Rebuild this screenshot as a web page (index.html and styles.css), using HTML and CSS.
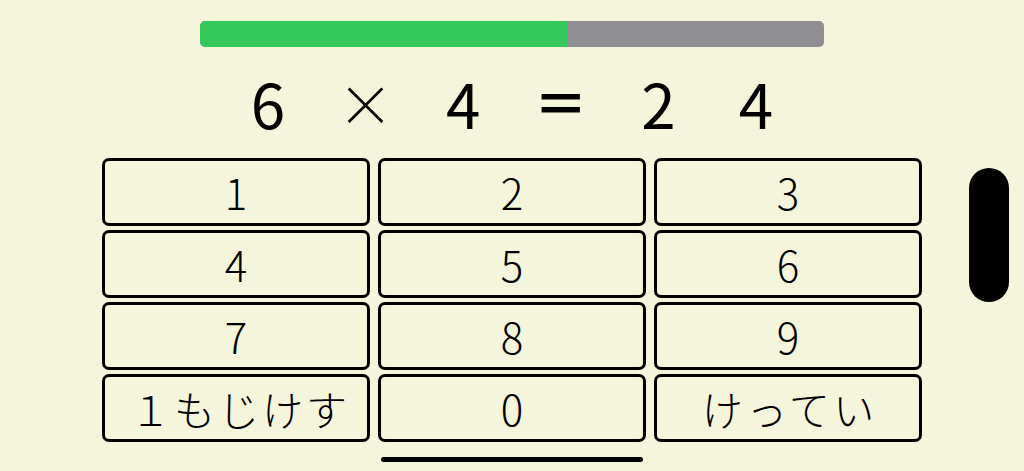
FILE: index.html
```html
<!DOCTYPE html>
<html lang="ja">
<head>
<meta charset="utf-8">
<title>かけざん</title>
<link rel="stylesheet" href="styles.css">
</head>
<body>
<div class="screen">
  <div class="progress"><div class="progress-fill" style="width: 368px"></div></div>
  <div class="equation">
    <span class="slot">6</span>
    <span class="slot slot-op">×</span>
    <span class="slot">4</span>
    <span class="slot slot-eq">＝</span>
    <span class="slot">2</span>
    <span class="slot">4</span>
  </div>
  <div class="keypad">
    <button class="key">1</button>
    <button class="key">2</button>
    <button class="key">3</button>
    <button class="key">4</button>
    <button class="key">5</button>
    <button class="key">6</button>
    <button class="key">7</button>
    <button class="key">8</button>
    <button class="key">9</button>
    <button class="key key-text key-delete">１もじけす</button>
    <button class="key">0</button>
    <button class="key key-text">けってい</button>
  </div>
  <div class="island"></div>
  <div class="home-indicator"></div>
</div>
</body>
</html>
```

FILE: styles.css
```css
html, body {
  margin: 0;
  padding: 0;
  background: #f5f5dc;
}

.screen {
  position: relative;
  width: 1024px;
  height: 471px;
  overflow: hidden;
  display: flex;
  flex-direction: column;
  align-items: center;
  padding-top: 21px;
  box-sizing: border-box;
  font-family: "Noto Sans CJK JP", "Noto Sans", sans-serif;
  color: #000;
}

.progress {
  width: 624px;
  height: 26px;
  border-radius: 5px;
  background: #8e8e93;
  overflow: hidden;
  display: flex;
}

.progress-fill {
  height: 100%;
  background: #34c759;
  border-radius: 5px 0 0 5px;
}

.equation {
  height: 111px;
  display: flex;
  align-items: center;
  justify-content: center;
  font-size: 62px;
  font-weight: 400;
  line-height: 1;
  padding-bottom: 2px;
  box-sizing: border-box;
}

.slot {
  width: 97.6px;
  text-align: center;
}

.slot-op {
  font-weight: 300;
  font-size: 56px;
}

.slot-eq {
  font-size: 54px;
  font-weight: 700;
}

.keypad {
  display: grid;
  grid-template-columns: repeat(3, 268px);
  grid-auto-rows: 68px;
  gap: 4px 8px;
}

.key {
  margin: 0;
  padding: 0;
  background: transparent;
  border: 3px solid #000;
  border-radius: 7px;
  font-family: "Noto Sans CJK JP", "Noto Sans", sans-serif;
  font-size: 42px;
  font-weight: 300;
  line-height: 1;
  color: #000;
  display: flex;
  align-items: center;
  justify-content: center;
}

.key-text {
  font-size: 41px;
  letter-spacing: 3.5px;
  padding-left: 3.5px;
}

.key-delete {
  padding-left: 8px;
  letter-spacing: 3px;
}

.island {
  position: absolute;
  left: 969px;
  top: 168px;
  width: 40px;
  height: 134px;
  border-radius: 20px;
  background: #000;
}

.home-indicator {
  position: absolute;
  left: 381px;
  top: 457px;
  width: 262px;
  height: 5px;
  border-radius: 3px;
  background: #000;
}
```
